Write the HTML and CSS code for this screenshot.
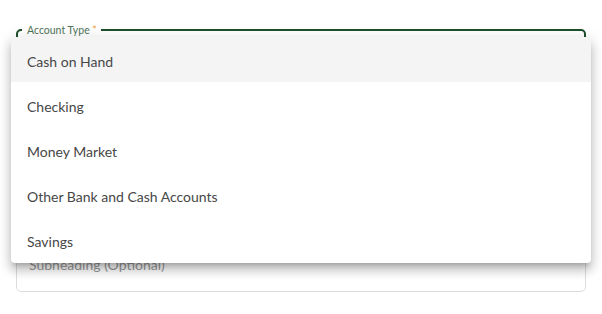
FILE: index.html
```html
<!DOCTYPE html>
<html lang="en">
<head>
    <meta charset="UTF-8">
    <title>Account Type</title>
    <link rel="stylesheet" href="styles.css">
</head>
<body>
    <div class="form">
        <fieldset class="field focused">
            <legend>Account Type <span class="req">*</span></legend>
        </fieldset>
        <div class="field plain">
            <span class="placeholder">Subheading (Optional)</span>
        </div>
    </div>

    <ul class="menu">
        <li class="selected">Cash on Hand</li>
        <li>Checking</li>
        <li>Money Market</li>
        <li>Other Bank and Cash Accounts</li>
        <li>Savings</li>
    </ul>
</body>
</html>
```

FILE: styles.css
```css
* {
    box-sizing: border-box;
    margin: 0;
    padding: 0;
}

body {
    font-family: 'Lato', 'Noto Sans', sans-serif;
    background: #fff;
    color: #444;
    position: relative;
}

.form {
    padding: 24px 16px 0;
    display: flex;
    flex-direction: column;
    gap: 149px;
}

.field {
    border-radius: 5px;
    height: 62px;
}

.field.focused {
    border: 2px solid #1d4f2a;
    padding: 0 4px;
}

.field legend {
    font-size: 10.5px;
    color: #4f7357;
    padding: 0 4px 0 5px;
    line-height: 12px;
}

.req {
    color: #e8a33c;
}

.field.plain {
    border: 1px solid #dcdcdc;
    height: 57px;
    display: flex;
    align-items: center;
    padding: 1px 12px 0;
}

.placeholder {
    color: #9a9a9a;
    font-size: 14px;
}

.menu {
    list-style: none;
    position: absolute;
    top: 37px;
    left: 11px;
    width: 580px;
    background: #fff;
    border-radius: 4px;
    box-shadow: 0 5px 5px -3px rgba(0, 0, 0, 0.2), 0 8px 10px 1px rgba(0, 0, 0, 0.14), 0 3px 14px 2px rgba(0, 0, 0, 0.12);
    padding: 0 0 1px;
}

.menu li {
    height: 45px;
    line-height: 41px;
    padding: 4px 16px 0;
    font-size: 14px;
    color: #474747;
}

.menu li.selected {
    background: #f4f4f4;
}
```
